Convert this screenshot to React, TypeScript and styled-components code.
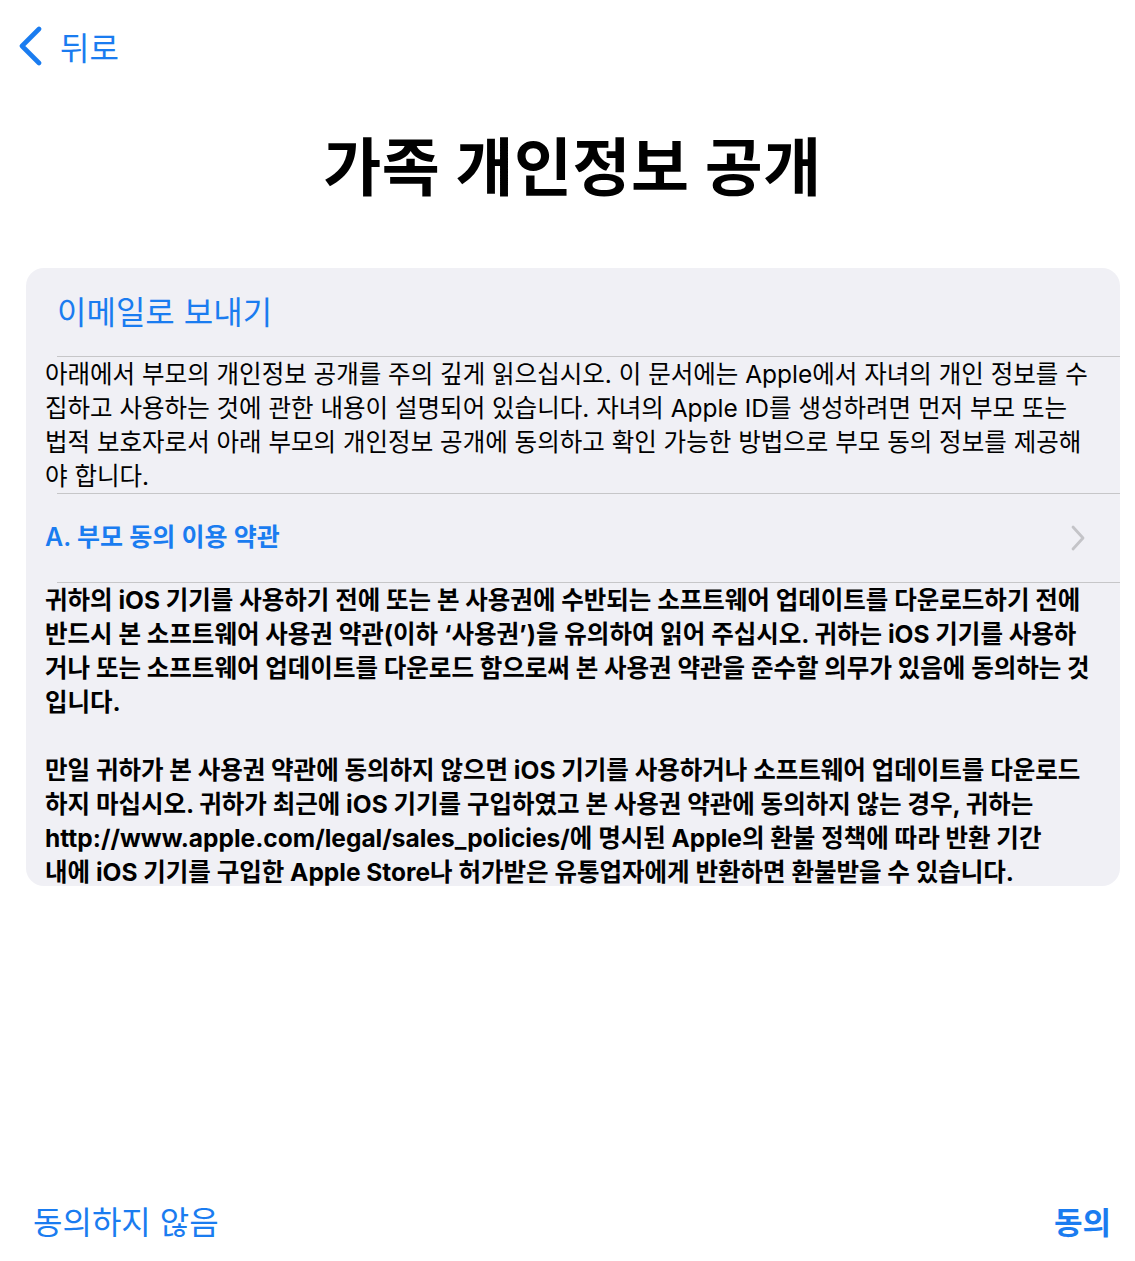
import React from 'react'
import styled, { createGlobalStyle } from 'styled-components'

const GlobalStyle = createGlobalStyle`
  html, body {
    margin: 0;
    padding: 0;
    background: #ffffff;
  }

  body {
    font-family: Inter, "Noto Sans CJK KR", sans-serif;
    -webkit-font-smoothing: antialiased;
  }
`

const BLUE = '#1a7cf0'

const Page = styled.div`
  width: 1135px;
  height: 1261px;
  display: flex;
  flex-direction: column;
  overflow: hidden;
`

const NavBar = styled.div`
  height: 92px;
  display: flex;
  align-items: center;
  padding-left: 18px;
`

const BackButton = styled.button`
  display: flex;
  align-items: center;
  gap: 16px;
  padding: 0;
  border: 0;
  background: none;
  color: ${BLUE};
  font-family: inherit;
  font-size: 32px;
  cursor: pointer;
`

const Title = styled.h1`
  margin: 0;
  height: 176px;
  padding: 0 0 36px 10px;
  box-sizing: border-box;
  display: flex;
  align-items: center;
  justify-content: center;
  font-size: 63px;
  font-weight: 700;
  letter-spacing: 0.5px;
  color: #000;
`

const Card = styled.section`
  margin-left: 26px;
  width: 1094px;
  height: 618px;
  border-radius: 18px;
  background: #f0f0f5;
  overflow: hidden;
`

const Row = styled.div<{ $inset?: number }>`
  height: 88px;
  display: flex;
  align-items: center;
  justify-content: space-between;
  padding: 0 34px 0 ${p => p.$inset ?? 19}px;
  box-sizing: border-box;
`

const EmailLink = styled.span`
  color: ${BLUE};
  font-size: 32px;
  margin-top: -4px;
`

const SectionLink = styled.span`
  color: ${BLUE};
  font-size: 25px;
  font-weight: 600;
  margin-top: -6px;
`

const Separator = styled.div`
  margin-left: 31px;
  height: 1px;
  background: #c6c6c8;
`

const Paragraph = styled.p<{ $bold?: boolean }>`
  margin: 0;
  padding: 0 19px;
  font-size: 24.5px;
  line-height: 34px;
  font-weight: ${p => (p.$bold ? 700 : 400)};
  color: #000;
  white-space: nowrap;

  & + & {
    margin-top: 34px;
  }
`

const Footer = styled.div`
  margin-top: auto;
  height: 82px;
  display: flex;
  align-items: center;
  justify-content: space-between;
  padding: 0 24px 0 33px;
`

const FooterButton = styled.button<{ $strong?: boolean }>`
  padding: 0;
  border: 0;
  background: none;
  color: ${BLUE};
  font-family: inherit;
  font-size: ${p => (p.$strong ? 31 : 32)}px;
  font-weight: ${p => (p.$strong ? 600 : 400)};
  cursor: pointer;
`

const BackChevron = () => (
  <svg width="26" height="40" viewBox="0 0 26 40" fill="none">
    <polyline
      points="21,3 4,20 21,37"
      stroke={BLUE}
      strokeWidth="4.6"
      strokeLinecap="round"
      strokeLinejoin="round"
    />
  </svg>
)

const RowChevron = () => (
  <svg width="16" height="26" viewBox="0 0 16 26" fill="none">
    <polyline
      points="3,2 13,13 3,24"
      stroke="#c4c4c8"
      strokeWidth="2.8"
      strokeLinecap="round"
      strokeLinejoin="round"
    />
  </svg>
)

const intro = [
  '아래에서 부모의 개인정보 공개를 주의 깊게 읽으십시오. 이 문서에는 Apple에서 자녀의 개인 정보를 수',
  '집하고 사용하는 것에 관한 내용이 설명되어 있습니다. 자녀의 Apple ID를 생성하려면 먼저 부모 또는',
  '법적 보호자로서 아래 부모의 개인정보 공개에 동의하고 확인 가능한 방법으로 부모 동의 정보를 제공해',
  '야 합니다.',
]

const terms = [
  [
    '귀하의 iOS 기기를 사용하기 전에 또는 본 사용권에 수반되는 소프트웨어 업데이트를 다운로드하기 전에',
    '반드시 본 소프트웨어 사용권 약관(이하 ‘사용권’)을 유의하여 읽어 주십시오. 귀하는 iOS 기기를 사용하',
    '거나 또는 소프트웨어 업데이트를 다운로드 함으로써 본 사용권 약관을 준수할 의무가 있음에 동의하는 것',
    '입니다.',
  ],
  [
    '만일 귀하가 본 사용권 약관에 동의하지 않으면 iOS 기기를 사용하거나 소프트웨어 업데이트를 다운로드',
    '하지 마십시오. 귀하가 최근에 iOS 기기를 구입하였고 본 사용권 약관에 동의하지 않는 경우, 귀하는',
    'http://www.apple.com/legal/sales_policies/에 명시된 Apple의 환불 정책에 따라 반환 기간',
    '내에 iOS 기기를 구입한 Apple Store나 허가받은 유통업자에게 반환하면 환불받을 수 있습니다.',
  ],
]

const Lines = ({ lines }: { lines: string[] }) => (
  <>
    {lines.map((line, i) => (
      <React.Fragment key={i}>
        {line}
        {i < lines.length - 1 && <br />}
      </React.Fragment>
    ))}
  </>
)

const App = () => {
  return (
    <Page>
      <GlobalStyle />

      <NavBar>
        <BackButton>
          <BackChevron />
          뒤로
        </BackButton>
      </NavBar>

      <Title>가족 개인정보 공개</Title>

      <Card>
        <Row $inset={31}>
          <EmailLink>이메일로 보내기</EmailLink>
        </Row>
        <Separator />

        <Paragraph>
          <Lines lines={intro} />
        </Paragraph>
        <Separator />

        <Row>
          <SectionLink>A. 부모 동의 이용 약관</SectionLink>
          <RowChevron />
        </Row>
        <Separator />

        {terms.map((block, i) => (
          <Paragraph key={i} $bold>
            <Lines lines={block} />
          </Paragraph>
        ))}
      </Card>

      <Footer>
        <FooterButton>동의하지 않음</FooterButton>
        <FooterButton $strong>동의</FooterButton>
      </Footer>
    </Page>
  )
}

export default App
